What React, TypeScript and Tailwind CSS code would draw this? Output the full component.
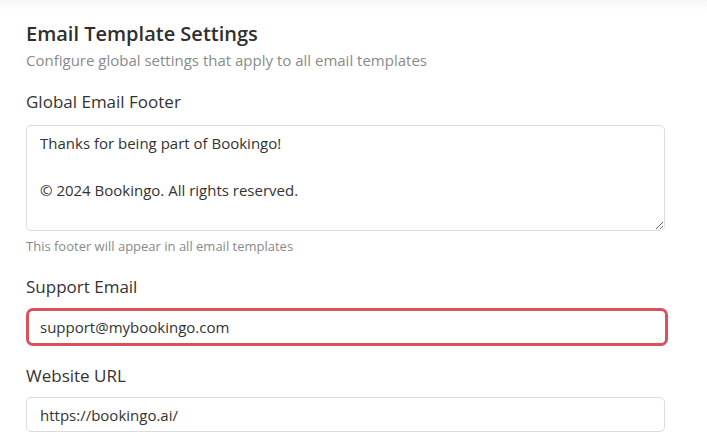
import React from "react";

export default function App() {
  return (
    <div
      className="w-[707px] h-[439px] bg-white overflow-hidden text-[#333333]"
      style={{ fontFamily: "'Open Sans', 'Noto Sans', sans-serif" }}
    >
      <div className="h-[10px] bg-gradient-to-b from-[#f5f5f5] to-white" />
      <div className="pl-[26px] w-[666px] flex flex-col">
        <h2 className="mt-[12px] text-[20px] leading-[24px] font-semibold text-[#2f2f2f]">
          Email Template Settings
        </h2>
        <p className="mt-[4px] text-[15px] leading-[20px] text-[#8a8a8a]">
          Configure global settings that apply to all email templates
        </p>

        <label className="mt-[20px] text-[17px] leading-[24px] font-medium text-[#333333]">
          Global Email Footer
        </label>
        <textarea
          className="mt-[11px] w-[639px] h-[106px] border border-[#dcdcdc] rounded-[5px] px-[13px] pt-[6px] text-[15px] leading-[23.5px] text-[#333333] outline-none resize-y"
          defaultValue={"Thanks for being part of Bookingo!\n\n© 2024 Bookingo. All rights reserved."}
        />
        <p className="mt-[7px] text-[13px] leading-[16px] text-[#8a8a8a]">
          This footer will appear in all email templates
        </p>

        <label className="mt-[21px] text-[17px] leading-[24px] font-medium text-[#333333]">
          Support Email
        </label>
        <input
          className="mt-[9px] w-[642px] h-[38px] border-[3px] border-[#d9515a] rounded-[7px] px-[11px] text-[15px] text-[#333333] outline-none"
          defaultValue="support@mybookingo.com"
        />

        <label className="mt-[18px] text-[17px] leading-[24px] font-medium text-[#333333]">
          Website URL
        </label>
        <input
          className="mt-[9px] w-[639px] h-[35px] border border-[#dcdcdc] rounded-[5px] px-[13px] text-[15px] text-[#333333] outline-none"
          defaultValue="https://bookingo.ai/"
        />
      </div>
    </div>
  );
}
